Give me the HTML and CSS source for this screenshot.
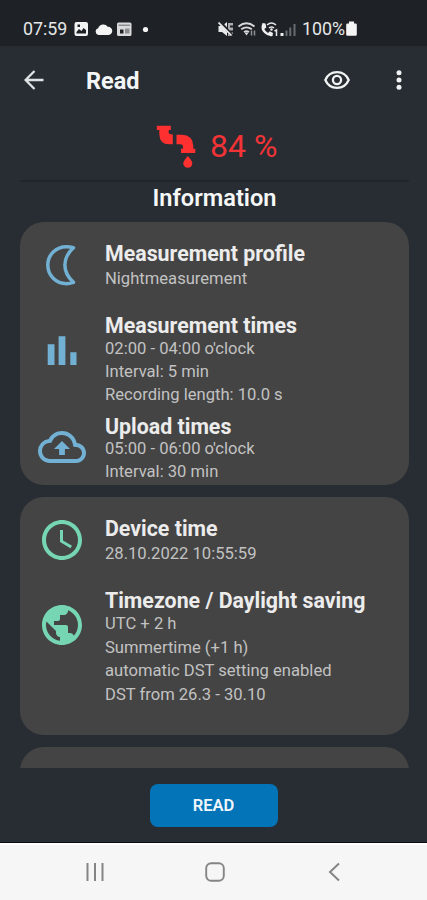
FILE: index.html
```html
<!DOCTYPE html>
<html lang="en">
<head>
<meta charset="utf-8">
<meta name="viewport" content="width=device-width">
<title>Read</title>
<link rel="stylesheet" href="styles.css">
</head>
<body>
<div class="phone">
  <header class="status">
    <span class="time">07:59</span>
    <svg class="notices" width="78" height="18" viewBox="0 0 78 18">
      <path fill="#f2f3f3" fill-rule="evenodd" d="M2.500 2h9.500a2 2 0 0 1 2 2v10a2 2 0 0 1-2 2H2.500a2 2 0 0 1-2-2V4a2 2 0 0 1 2-2zM2.500 13.500h9.500V10l-2.500-2L7.500 11 5 9 2.500 12zM3.500 4.500v2.500H6V4.500z"/>
      <path fill="#f5f5f5" d="M24.500 15a3.500 3.500 0 0 1-.3-6.800 5.300 5.300 0 0 1 9.500-1.400 4.100 4.100 0 0 1 .9 8.200z"/>
      <path fill="#d9dadb" d="M44.500 2.500h11.500a1.500 1.500 0 0 1 1.500 1.500v10.500a1.500 1.500 0 0 1-1.500 1.500H44.500a1.500 1.500 0 0 1-1.500-1.500V4A1.500 1.500 0 0 1 44.500 2.500z"/>
      <path fill="#8b8e90" d="M44.500 4.500h11.500v1.500H44.500zM51 8.500h4.500v5H51z"/><path fill="#222" d="M46 9.500h3.500v4H46z"/>
      <circle cx="71.500" cy="9.500" r="2.600" fill="#f5f5f5"/>
    </svg>
    <svg class="signals" width="80" height="18" viewBox="0 0 80 18">
      <g fill="#e8e9ea"><path d="M.5 6H4l5-4v14l-5-4H.500z"/><path d="M10 3h5v2.500h-3v2h3v3h-3v2h3V16h-5z" opacity=".7"/></g>
      <path stroke="#22272a" stroke-width="3" d="M1.500 1l13 15"/><path stroke="#eee" stroke-width="1.700" d="M.5 2.500l13 13"/>
      <g fill="none" stroke="#d8dadc" stroke-width="1.800"><path d="M20.500 6.500q8-6.500 16 0M23.200 9.300q5.300-4 10.600 0M26 12q2.500-1.700 5 0"/></g>
      <path fill="#e5e5e5" d="M26.500 12.500h4l-2 3z"/><path stroke="#8b9093" stroke-width="1.500" d="M33.500 15.500v-5M36.500 15.500v-5"/>
      <path fill="#f0f0f0" d="M44.500 3l3 .5.800 4-2 1.500q1.200 2.600 3.700 4l1.800-1.800 3.200 1.800-.5 3q-4 1-8.300-3T44.500 3z"/>
      <g fill="none" stroke="#e4e5e6" stroke-width="1.500"><path d="M49 5q4.500-4 9 0M51 8q2.500-2 5 0"/><path d="M56.500 11l2-1v6"/></g>
      <circle cx="53.500" cy="9.500" r="1.200" fill="#eee"/>
      <path fill="#eee" d="M62.500 13h3v3h-3z"/><path fill="#676c70" d="M67.500 10.500h2V16h-2zM71.300 7.500h2V16h-2zM75.500 4h2v12h-2z"/>
    </svg>
    <span class="percent">100%</span>
    <svg class="battery" width="11" height="18" viewBox="0 0 11 18"><path fill="#f5f5f5" d="M3 1.500h5v2h1.500a1.300 1.300 0 0 1 1.300 1.300v9.700a1.300 1.300 0 0 1-1.300 1.300h-8A1.300 1.300 0 0 1 .2 14.500V4.800a1.300 1.300 0 0 1 1.300-1.300H3z"/></svg>
  </header>

  <nav class="appbar">
    <svg class="back" width="20" height="20" viewBox="0 0 20 20"><path fill="none" stroke="#dfe3e5" stroke-width="2.300" d="M19.500 10H2M10.500 1L1.600 10l8.900 9"/></svg>
    <h1>Read</h1>
    <svg class="eye" width="28" height="28" viewBox="0 0 24 24"><path fill="none" stroke="#f0f2f3" stroke-width="2" d="M2 12C3.800 7.800 7.500 5.300 12 5.300S20.200 7.800 22 12c-1.800 4.200-5.500 6.700-10 6.700S3.800 16.200 2 12z"/><circle cx="12" cy="12" r="3.500" fill="none" stroke="#f0f2f3" stroke-width="2"/></svg>
    <svg class="more" width="6" height="22" viewBox="0 0 6 22" fill="#f0f2f3"><circle cx="3" cy="3.700" r="2.500"/><circle cx="3" cy="11" r="2.500"/><circle cx="3" cy="18.300" r="2.500"/></svg>
  </nav>

  <section class="score">
    <svg width="40" height="44" viewBox="0 0 40 44" fill="#ff3030">
      <path d="M.8 1.700h14V6h-2q-1 4 2 4.300l2 .3v9.700h-3.500Q3.500 20.300 3.300 10V6H.8zM20.500 10.700H26q10.500.3 11.300 11v3H39.300V29H25v-4.300h2v-2q0-2.400-2.500-2.400h-4z"/>
      <path d="M31.800 32q4.500 5 4.500 7.300a4.500 4.500 0 0 1-9 0Q27.300 37 31.800 32z"/>
    </svg>
    <span>84 %</span>
  </section>

  <main class="content">
    <h2 class="title">Information</h2>
    <section class="card measurement">
      <article class="entry profile">
        <svg class="moon" width="48" height="48" viewBox="0 0 48 48"><path fill="none" stroke="#72b1d3" stroke-width="3.500" stroke-linejoin="round" d="M35.500 6.800Q31.500 5.700 28.500 5.700C18 5.700 9.800 13.500 9.800 24S18 42.700 28.500 42.700Q31.500 42.700 35.500 41.400C24 31 24 17 35.500 6.800z"/></svg>
        <div class="text"><h3>Measurement profile</h3><p>Nightmeasurement</p></div>
      </article>
      <article class="entry times">
        <svg width="48" height="48" viewBox="0 0 48 48"><path fill="#72b1d3" d="M9.700 17.300h6.800V38H9.700zM20.600 9.300h6.800V38h-6.800zM32.300 25.300h6.200V38h-6.200z"/></svg>
        <div class="text"><h3>Measurement times</h3><p>02:00 - 04:00 o'clock</p><p>Interval: 5 min</p><p>Recording length: 10.0 s</p></div>
      </article>
      <article class="entry upload">
        <svg width="48" height="48" viewBox="0 0 24 24" fill="#72b1d3"><path d="M19.350 10.040A7.490 7.490 0 0 0 12 4C9.110 4 6.600 5.640 5.350 8.040A5.994 5.994 0 0 0 0 14c0 3.310 2.690 6 6 6h13c2.760 0 5-2.240 5-5 0-2.640-2.050-4.780-4.650-4.960zM19 18H6c-2.210 0-4-1.790-4-4 0-2.050 1.530-3.760 3.560-3.970l1.070-.11.500-.95A5.469 5.469 0 0 1 12 6c2.620 0 4.880 1.860 5.390 4.430l.3 1.500 1.530.11A2.980 2.980 0 0 1 22 15c0 1.650-1.350 3-3 3zM8 13h2.550v3h2.900v-3H16l-4-4-4 4z"/></svg>
        <div class="text"><h3>Upload times</h3><p>05:00 - 06:00 o'clock</p><p>Interval: 30 min</p></div>
      </article>
    </section>
    <section class="card device">
      <article class="entry clock">
        <svg width="48" height="48" viewBox="0 0 24 24" fill="#76d6b4"><path d="M11.990 2C6.470 2 2 6.480 2 12s4.470 10 9.990 10C17.520 22 22 17.520 22 12S17.520 2 11.990 2zM12 20c-4.420 0-8-3.580-8-8s3.580-8 8-8 8 3.580 8 8-3.580 8-8 8zm.5-13H11v6l5.250 3.150.75-1.230-4.500-2.670z"/></svg>
        <div class="text"><h3>Device time</h3><p>28.10.2022 10:55:59</p></div>
      </article>
      <article class="entry zone">
        <svg width="48" height="48" viewBox="0 0 24 24" fill="#76d6b4"><path d="M12 2C6.480 2 2 6.480 2 12s4.480 10 10 10 10-4.480 10-10S17.520 2 12 2zm-1 17.930c-3.950-.49-7-3.850-7-7.930 0-.62.080-1.210.21-1.790L9 15v1c0 1.100.9 2 2 2v1.930zm6.900-2.540c-.26-.81-1-1.390-1.900-1.390h-1v-3c0-.55-.45-1-1-1H8v-2h2c.55 0 1-.45 1-1V7h2c1.100 0 2-.9 2-2v-.41c2.930 1.190 5 4.060 5 7.410 0 2.080-.8 3.970-2.100 5.390z"/></svg>
        <div class="text"><h3>Timezone / Daylight saving</h3><p>UTC + 2 h</p><p>Summertime (+1 h)</p><p>automatic DST setting enabled</p><p>DST from 26.3 - 30.10</p></div>
      </article>
    </section>
    <section class="card next"></section>
  </main>

  <footer class="actions"><button class="read">READ</button></footer>
  <nav class="system">
    <svg width="20" height="20" viewBox="0 0 20 20"><path fill="none" stroke="#858585" stroke-width="2" d="M2.500 1v18M10 1v18M17.500 1v18"/></svg>
    <svg width="20" height="20" viewBox="0 0 20 20"><rect x="1.200" y="1.200" width="17.600" height="17.600" rx="5" fill="none" stroke="#858585" stroke-width="1.900"/></svg>
    <svg width="20" height="20" viewBox="0 0 20 20"><path fill="none" stroke="#858585" stroke-width="2" d="M15 1.500L6 10l9 8.500"/></svg>
  </nav>
</div>
</body>
</html>
```
FILE: styles.css
```css
* { box-sizing: border-box; }
body { margin: 0; font-family: Roboto, sans-serif; background: #272d33; color: #e8e8e8; }
h1, h2, h3, p { margin: 0; }
svg { display: block; flex: none; }
.phone { width: 427px; height: 900px; display: flex; flex-direction: column; overflow: hidden; }
.status { height: 46px; flex: none; display: flex; align-items: center; padding: 11px 0 0 23px; background: #1e2226; color: #e6e7e8; font-size: 17.8px; line-height: 20px; }
.time { width: 51px; }
.signals { margin-left: 66px; }
.percent { margin-left: 4px; width: 43px; white-space: nowrap; }
.battery { margin-left: 1px; }
.appbar { height: 66px; flex: none; display: flex; align-items: center; padding: 2px 25px 0 24px; }
.appbar h1 { margin: 1px 0 0 42px; font-size: 23.5px; line-height: 28px; font-weight: 700; color: #f4f5f6; }
.eye { margin-left: auto; }
.more { margin-left: 45px; }
.score { height: 68px; flex: none; display: flex; align-items: center; gap: 14px; padding-left: 156px; color: #f23437; font-size: 32px; font-weight: 400; line-height: 40px; }
.content { height: 588px; flex: none; overflow: hidden; margin: 0 18px 0 20px; border-top: 2px solid #20252a; }
.title { height: 40px; text-align: center; font-size: 23.6px; line-height: 32px; font-weight: 600; color: #f6f7f7; }
.card { background: #444; border-radius: 24px; }
.measurement { height: 263px; padding-top: 19px; }
.device { height: 238px; margin-top: 12px; padding-top: 19px; }
.next { height: 90px; margin-top: 12px; }
.entry { display: grid; grid-template-columns: 48px 1fr; column-gap: 19px; padding-left: 18px; align-items: start; }
.entry h3 { padding-top: 1px; margin-bottom: -1px; font-size: 21.35px; line-height: 24px; font-weight: 700; color: #ececec; white-space: nowrap; }
.entry p { font-size: 16.6px; line-height: 23px; color: #c2c2c2; }
.profile, .clock { height: 72px; }
.profile p, .clock p { margin-top: 2px; }
.times { height: 101px; }
.times > svg { margin-top: 14px; }
.upload > svg { margin-top: 9px; }
.upload p { line-height: 22.5px; }
.zone > svg { margin-top: 13px; }
.zone p { line-height: 23.6px; }
.actions { height: 74px; flex: none; display: flex; justify-content: center; align-items: flex-start; padding-top: 16px; }
.read { width: 128px; height: 43px; padding: 0; border: 0; border-radius: 8px; background: #0474b8; color: #f0f6fb; font: 600 16.5px/43px Roboto, sans-serif; }
.system { height: 58px; flex: none; display: flex; align-items: center; justify-content: space-between; padding: 0 83px 0 85px; background: #f6f6f6; border-top: 1px solid #0b0e12; box-shadow: inset 0 2px 0 #fff; }
```
